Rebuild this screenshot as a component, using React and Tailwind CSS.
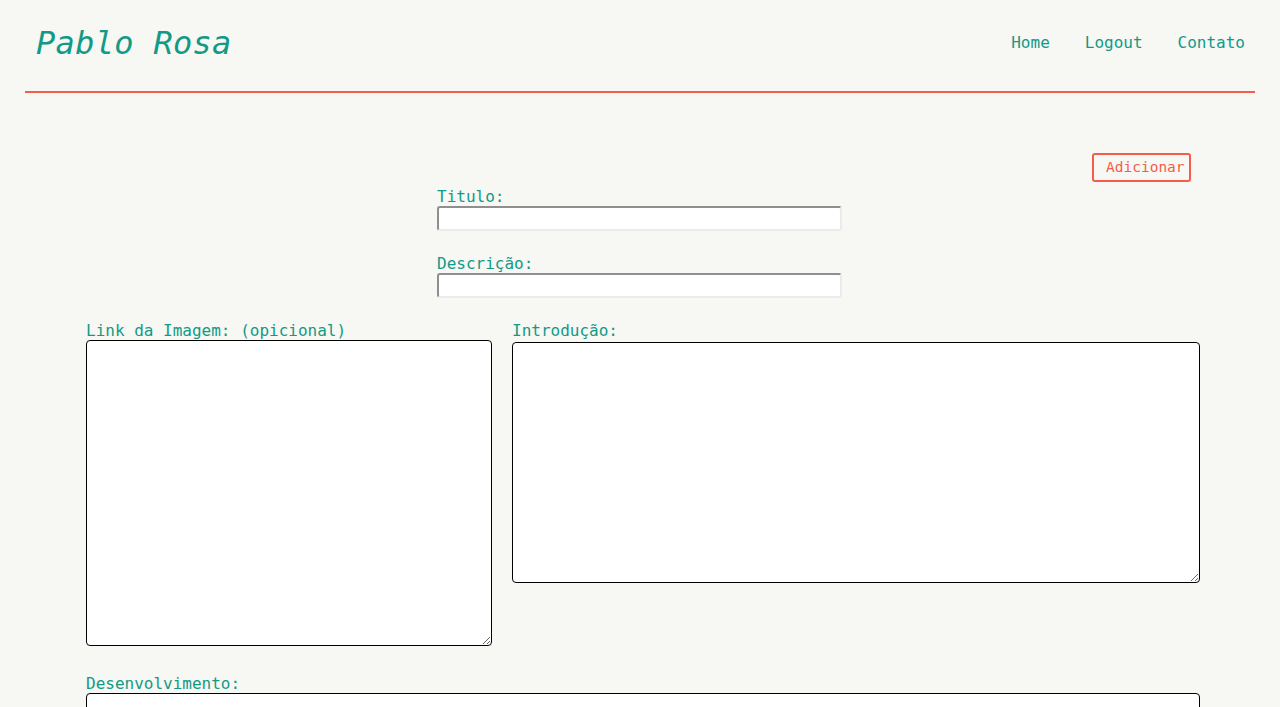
export default function App() {
  const label = "block text-[16px] leading-[19px] pt-[1px] text-[#119a87]";
  const input =
    "block w-[405px] h-[25px] bg-white rounded-[3px] border-2 border-t-[#8f8f8f] border-l-[#8f8f8f] border-b-[#ebebeb] border-r-[#ebebeb] px-1 outline-none";
  const area = "block bg-white border border-black rounded-[4px] p-1 outline-none";

  return (
    <div className="min-h-screen bg-[#f7f7f3] font-['DejaVu_Sans_Mono',monospace] text-[#119a87]">
      <header className="px-[25px]">
        <div className="flex h-[93px] items-center justify-between border-b-2 border-[#f45d4d] pl-[11px] pr-[10px] pb-[4px]">
          <h1 className="text-[32px] italic font-light tracking-[0.3px] -mt-[1px]">Pablo Rosa</h1>
          <nav className="flex gap-[35px] text-[16px] -mt-[2px]">
            <a href="#">Home</a>
            <a href="#">Logout</a>
            <a href="#">Contato</a>
          </nav>
        </div>
      </header>

      <form className="pl-[86px] pr-[80px] pt-[60px] pb-10">
        <div className="flex justify-end pr-[9px]">
          <button
            type="button"
            className="h-[29px] w-[99px] rounded-[3px] border-2 border-[#f45d4d] pl-[12px] text-left text-[14.5px] text-[#f45d4d]"
          >
            Adicionar
          </button>
        </div>

        <div className="pl-[351px] mt-[4px]">
          <label className={label}>Titulo:</label>
          <input type="text" className={input} />
          <label className={label + " mt-[22px]"}>Descrição:</label>
          <input type="text" className={input} />
        </div>

        <div className="mt-[22px] flex gap-[20px] items-start">
          <div className="w-[406px]">
            <label className={label}>Link da Imagem: (opicional)</label>
            <textarea className={area + " w-[406px] h-[306px]"} />
          </div>
          <div className="flex-1">
            <label className={label}>Introdução:</label>
            <textarea className={area + " w-full h-[241px] mt-[2px]"} />
          </div>
        </div>

        <div className="mt-[27px]">
          <label className={label}>Desenvolvimento:</label>
          <textarea className={area + " w-full h-[300px]"} />
        </div>
      </form>
    </div>
  );
}
